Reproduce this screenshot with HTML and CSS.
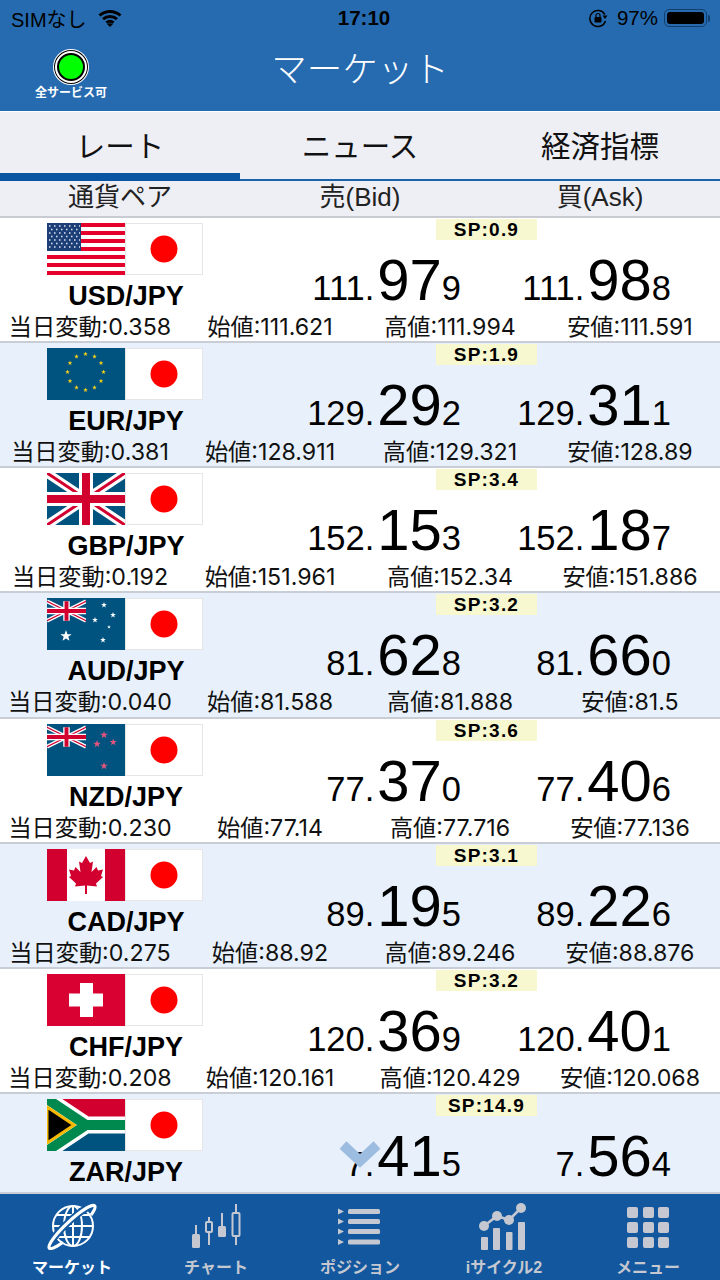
FILE: index.html
```html
<!DOCTYPE html>
<html lang="ja">
  <head>
    <meta charset="utf-8">
    <meta name="viewport" content="width=device-width, initial-scale=1.0">
    <title>マーケット</title>
    <link rel="stylesheet" href="styles.css">
  </head>
  <body>
    <svg class="defs" width="0" height="0">
      <defs>
        <symbol id="jp" viewBox="0 0 78 52">
          <rect width="78" height="52" fill="#fff"/>
          <rect x=".5" y=".5" width="77" height="51" fill="none" stroke="#e6e6e6"/>
          <circle cx="39" cy="26" r="13.5" fill="#f00"/>
        </symbol>
        <symbol id="ujack" viewBox="0 0 60 30">
          <rect width="60" height="30" fill="#00527f"/>
          <path d="M0 0 60 30M60 0 0 30" stroke="#fff" stroke-width="6"/>
          <path d="M0 0 60 30M60 0 0 30" stroke="#d1002f" stroke-width="2"/>
          <path d="M30 0V30M0 15H60" stroke="#fff" stroke-width="10"/>
          <path d="M30 0V30M0 15H60" stroke="#d1002f" stroke-width="6"/>
        </symbol>
        <symbol id="star" viewBox="-10 -10 20 20">
          <path d="M0-10 2.4-3.1 9.5-3.1 3.8 1.2 5.9 8.1 0 4 -5.9 8.1-3.8 1.2-9.5-3.1-2.4-3.1Z"/>
        </symbol>
        <symbol id="us" viewBox="0 0 78 52">
          <rect width="78" height="52" fill="#fff"/>
          <path d="M0 2H78M0 10H78M0 18H78M0 26H78M0 34H78M0 42H78M0 50H78" stroke="#e4002b" stroke-width="4"/>
          <rect width="34" height="28" fill="#1d3f77"/>
          <path d="M2 3H33M4 6.500H33M2 10H33M4 13.500H33M2 17H33M4 20.500H33M2 24H33" stroke="#dfe6f2" stroke-width="1.500" stroke-dasharray="1.500 3.500"/>
        </symbol>
        <symbol id="eu" viewBox="0 0 78 52">
          <rect width="78" height="52" fill="#00527f"/>
          <g fill="#f7d117">
            <use href="#star" x="36" y="3.500" width="5" height="5"/>
            <use href="#star" x="45" y="6" width="5" height="5"/>
            <use href="#star" x="51.500" y="12.500" width="5" height="5"/>
            <use href="#star" x="54" y="21.500" width="5" height="5"/>
            <use href="#star" x="51.500" y="30.500" width="5" height="5"/>
            <use href="#star" x="45" y="37" width="5" height="5"/>
            <use href="#star" x="36" y="39.500" width="5" height="5"/>
            <use href="#star" x="27" y="37" width="5" height="5"/>
            <use href="#star" x="20.500" y="30.500" width="5" height="5"/>
            <use href="#star" x="18" y="21.500" width="5" height="5"/>
            <use href="#star" x="20.500" y="12.500" width="5" height="5"/>
            <use href="#star" x="27" y="6" width="5" height="5"/>
          </g>
        </symbol>
        <symbol id="gb" viewBox="0 0 78 52">
          <rect width="78" height="52" fill="#00527f"/>
          <path d="M0 0 78 52M78 0 0 52" stroke="#fff" stroke-width="9"/>
          <path d="M0 0 78 52M78 0 0 52" stroke="#d1002f" stroke-width="3"/>
          <path d="M39 0V52M0 26H78" stroke="#fff" stroke-width="14"/>
          <path d="M39 0V52M0 26H78" stroke="#d1002f" stroke-width="8"/>
        </symbol>
        <symbol id="au" viewBox="0 0 78 52">
          <rect width="78" height="52" fill="#00527f"/>
          <use href="#ujack" width="39" height="26"/>
          <g fill="#fff">
            <use href="#star" x="13" y="32" width="12" height="12"/>
            <use href="#star" x="54" y="4" width="6" height="6"/>
            <use href="#star" x="63" y="14" width="6" height="6"/>
            <use href="#star" x="45" y="19" width="6" height="6"/>
            <use href="#star" x="60" y="27" width="4" height="4"/>
            <use href="#star" x="53" y="39" width="6" height="6"/>
          </g>
        </symbol>
        <symbol id="nz" viewBox="0 0 78 52">
          <rect width="78" height="52" fill="#00527f"/>
          <use href="#ujack" width="39" height="26"/>
          <g fill="#e0557d">
            <use href="#star" x="53" y="7" width="8" height="8"/>
            <use href="#star" x="62.500" y="14.500" width="7.500" height="7.500"/>
            <use href="#star" x="46" y="16" width="8" height="8"/>
            <use href="#star" x="53" y="38" width="8" height="8"/>
          </g>
        </symbol>
        <symbol id="ca" viewBox="0 0 78 52">
          <rect width="78" height="52" fill="#fff"/>
          <path d="M0 0H20V52H0ZM58 0H78V52H58Z" fill="#d1002f"/>
          <path d="M39 7 43 14 46 12.500 44.500 23 49.500 18 51 21.500 56 20.500 54 27 56 28 49 34.500 50 37.500 40 36.500V45H38V36.500L28 37.500 29 34.500 22 28 24 27 22 20.500 27 21.500 28.500 18 33.500 23 32 12.500 35 14Z" fill="#d1002f"/>
        </symbol>
        <symbol id="ch" viewBox="0 0 78 52">
          <rect width="78" height="52" fill="#d90032"/>
          <path d="M33 9H46V19.500H56V32.500H46V43H33V32.500H22V19.500H33Z" fill="#fff"/>
        </symbol>
        <symbol id="za" viewBox="0 0 78 52">
          <rect width="78" height="26" fill="#d1002f"/>
          <rect y="26" width="78" height="26" fill="#00527f"/>
          <path d="M0 0 39 26 0 52M39 26H78" fill="none" stroke="#fff" stroke-width="17"/>
          <path d="M0 0 39 26 0 52M39 26H78" fill="none" stroke="#00894e" stroke-width="10"/>
          <path d="M0 8 27 26 0 44Z" fill="#000" stroke="#f7b800" stroke-width="3"/>
        </symbol>
      </defs>
    </svg>

    <header class="top">
      <div class="status">
        <div class="status-left">
          <span>SIMなし</span>
          <svg class="wifi" viewBox="0 0 24 18" width="24" height="18">
            <path d="M1.500 6.500C7.500 1 16.500 1 22.500 6.500M5 10.200C9 6.700 15 6.700 19 10.200M8.400 13.600C10.500 12 13.500 12 15.600 13.600" fill="none" stroke="#000" stroke-width="3"/>
            <path d="M12 18 9 15C11 14 13 14 15 15Z"/>
          </svg>
        </div>
        <div class="status-time">17:10</div>
        <div class="status-right">
          <svg class="rotlock" viewBox="0 0 20 20" width="20" height="20">
            <path d="M16.800 6.500A8 8 0 1 0 17.500 13" fill="none" stroke="#000" stroke-width="1.500"/>
            <path d="M14.500 7.500H19.500L17 11Z"/>
            <rect x="6.500" y="9" width="7" height="5.500" rx="1"/>
            <path d="M8 9V7.500A2 2 0 0 1 12 7.500V9" fill="none" stroke="#000" stroke-width="1.200"/>
          </svg>
          <span>97%</span>
          <div class="battery"><div class="battery-fill"></div></div>
          <div class="battery-tip"></div>
        </div>
      </div>
      <div class="nav">
        <div class="service">
          <div class="lamp"></div>
          <div class="service-label">全サービス可</div>
        </div>
        <h1 class="title">マーケット</h1>
      </div>
    </header>

    <nav class="tabs">
      <div class="tab tab-active">レート</div>
      <div class="tab">ニュース</div>
      <div class="tab">経済指標</div>
    </nav>

    <div class="cols">
      <div>通貨ペア</div>
      <div>売(Bid)</div>
      <div>買(Ask)</div>
    </div>

    <main class="list">
      <section class="row">
        <div class="main">
          <div class="pair">
            <div class="flags"><svg class="flag"><use href="#us"/></svg><svg class="flag"><use href="#jp"/></svg></div>
            <div class="pair-name">USD/JPY</div>
          </div>
          <div class="quotes">
            <div class="sp">SP:0.9</div>
            <div class="prices">
              <div class="price">111.<b>97</b>9</div>
              <div class="price">111.<b>98</b>8</div>
            </div>
          </div>
        </div>
        <div class="stats"><div>当日変動:0.358</div><div>始値:111.621</div><div>高値:111.994</div><div>安値:111.591</div></div>
      </section>

      <section class="row row-alt">
        <div class="main">
          <div class="pair">
            <div class="flags"><svg class="flag"><use href="#eu"/></svg><svg class="flag"><use href="#jp"/></svg></div>
            <div class="pair-name">EUR/JPY</div>
          </div>
          <div class="quotes">
            <div class="sp">SP:1.9</div>
            <div class="prices">
              <div class="price">129.<b>29</b>2</div>
              <div class="price">129.<b>31</b>1</div>
            </div>
          </div>
        </div>
        <div class="stats"><div>当日変動:0.381</div><div>始値:128.911</div><div>高値:129.321</div><div>安値:128.89</div></div>
      </section>

      <section class="row">
        <div class="main">
          <div class="pair">
            <div class="flags"><svg class="flag"><use href="#gb"/></svg><svg class="flag"><use href="#jp"/></svg></div>
            <div class="pair-name">GBP/JPY</div>
          </div>
          <div class="quotes">
            <div class="sp">SP:3.4</div>
            <div class="prices">
              <div class="price">152.<b>15</b>3</div>
              <div class="price">152.<b>18</b>7</div>
            </div>
          </div>
        </div>
        <div class="stats"><div>当日変動:0.192</div><div>始値:151.961</div><div>高値:152.34</div><div>安値:151.886</div></div>
      </section>

      <section class="row row-alt">
        <div class="main">
          <div class="pair">
            <div class="flags"><svg class="flag"><use href="#au"/></svg><svg class="flag"><use href="#jp"/></svg></div>
            <div class="pair-name">AUD/JPY</div>
          </div>
          <div class="quotes">
            <div class="sp">SP:3.2</div>
            <div class="prices">
              <div class="price">81.<b>62</b>8</div>
              <div class="price">81.<b>66</b>0</div>
            </div>
          </div>
        </div>
        <div class="stats"><div>当日変動:0.040</div><div>始値:81.588</div><div>高値:81.888</div><div>安値:81.5</div></div>
      </section>

      <section class="row">
        <div class="main">
          <div class="pair">
            <div class="flags"><svg class="flag"><use href="#nz"/></svg><svg class="flag"><use href="#jp"/></svg></div>
            <div class="pair-name">NZD/JPY</div>
          </div>
          <div class="quotes">
            <div class="sp">SP:3.6</div>
            <div class="prices">
              <div class="price">77.<b>37</b>0</div>
              <div class="price">77.<b>40</b>6</div>
            </div>
          </div>
        </div>
        <div class="stats"><div>当日変動:0.230</div><div>始値:77.14</div><div>高値:77.716</div><div>安値:77.136</div></div>
      </section>

      <section class="row row-alt">
        <div class="main">
          <div class="pair">
            <div class="flags"><svg class="flag"><use href="#ca"/></svg><svg class="flag"><use href="#jp"/></svg></div>
            <div class="pair-name">CAD/JPY</div>
          </div>
          <div class="quotes">
            <div class="sp">SP:3.1</div>
            <div class="prices">
              <div class="price">89.<b>19</b>5</div>
              <div class="price">89.<b>22</b>6</div>
            </div>
          </div>
        </div>
        <div class="stats"><div>当日変動:0.275</div><div>始値:88.92</div><div>高値:89.246</div><div>安値:88.876</div></div>
      </section>

      <section class="row">
        <div class="main">
          <div class="pair">
            <div class="flags"><svg class="flag"><use href="#ch"/></svg><svg class="flag"><use href="#jp"/></svg></div>
            <div class="pair-name">CHF/JPY</div>
          </div>
          <div class="quotes">
            <div class="sp">SP:3.2</div>
            <div class="prices">
              <div class="price">120.<b>36</b>9</div>
              <div class="price">120.<b>40</b>1</div>
            </div>
          </div>
        </div>
        <div class="stats"><div>当日変動:0.208</div><div>始値:120.161</div><div>高値:120.429</div><div>安値:120.068</div></div>
      </section>

      <section class="row row-alt row-last">
        <div class="main">
          <div class="pair">
            <div class="flags"><svg class="flag"><use href="#za"/></svg><svg class="flag"><use href="#jp"/></svg></div>
            <div class="pair-name">ZAR/JPY</div>
          </div>
          <div class="quotes">
            <div class="sp">SP:14.9</div>
            <div class="prices">
              <div class="price">7.<b>41</b>5</div>
              <div class="price">7.<b>56</b>4</div>
            </div>
          </div>
        </div>
      </section>

      <!-- pull-down hint, sits over the last row -->
      <svg class="hint" viewBox="0 0 42 28" width="42" height="28">
        <path d="M4 4 21 20 38 4" fill="none" stroke="#9cbde0" stroke-width="10"/>
      </svg>
    </main>

    <footer class="tabbar">
      <div class="tabitem tabitem-active">
        <svg viewBox="0 0 50 48" width="50" height="48">
          <g fill="none" stroke="#fff" stroke-width="2">
            <circle cx="26" cy="24" r="20"/>
            <ellipse cx="26" cy="24" rx="9" ry="20"/>
            <path d="M26 4V44M6 24H46M9 13H43M9 35H43"/>
          </g>
          <g fill="none" transform="rotate(-43 25 25)">
            <path d="M-6 25A31 6 0 0 1 56 25" stroke="#13589f" stroke-width="7"/>
            <path d="M-6 25A31 6 0 0 1 56 25M-6 25A31 6 0 0 0 8 30M56 25A31 6 0 0 1 47 29.200" stroke="#fff" stroke-width="3.200"/>
          </g>
        </svg>
        <div>マーケット</div>
      </div>
      <div class="tabitem">
        <svg viewBox="0 0 50 48" width="50" height="48" fill="#c5c8d0">
          <path d="M5 23V33M18 15V20M18 30V43M31 11V25M45 2V11M45 34V43" stroke="#c5c8d0" stroke-width="2" fill="none"/>
          <rect x="1" y="32" width="8" height="14" rx="1.500"/>
          <rect x="15" y="20" width="6" height="10" rx="1" fill="none" stroke="#c5c8d0" stroke-width="2"/>
          <rect x="27" y="24" width="8" height="11" rx="1.500"/>
          <rect x="41.500" y="11" width="7" height="23" rx="1" fill="none" stroke="#c5c8d0" stroke-width="2"/>
        </svg>
        <div>チャート</div>
      </div>
      <div class="tabitem">
        <svg viewBox="0 0 50 48" width="50" height="48" fill="#c5c8d0">
          <path d="M3 6.500 9 9.500 3 12.500ZM3 16.500 9 19.500 3 22.500ZM3 26.500 9 29.500 3 32.500ZM3 37 9 40 3 43Z"/>
          <rect x="13" y="7" width="32" height="5" rx="1.500"/>
          <rect x="13" y="17" width="32" height="5" rx="1.500"/>
          <rect x="13" y="27" width="32" height="5" rx="1.500"/>
          <rect x="13" y="37.500" width="32" height="5" rx="1.500"/>
        </svg>
        <div>ポジション</div>
      </div>
      <div class="tabitem">
        <svg viewBox="0 0 50 48" width="50" height="48" fill="#c5c8d0">
          <rect x="2" y="35" width="7" height="13" rx="1"/>
          <rect x="14" y="26" width="7" height="22" rx="1"/>
          <rect x="27" y="30" width="6.500" height="18" rx="1"/>
          <rect x="39" y="20" width="7" height="28" rx="1"/>
          <path d="M5 24 18 14 30 18 42 6" fill="none" stroke="#c5c8d0" stroke-width="2.500"/>
          <circle cx="5" cy="24" r="5"/>
          <circle cx="18" cy="14" r="5"/>
          <circle cx="30" cy="18" r="5"/>
          <circle cx="42" cy="6" r="5"/>
        </svg>
        <div>iサイクル2</div>
      </div>
      <div class="tabitem">
        <svg viewBox="0 0 50 48" width="50" height="48" fill="#c5c8d0">
          <rect x="4" y="5" width="11" height="11" rx="2"/>
          <rect x="20" y="5" width="11" height="11" rx="2"/>
          <rect x="35" y="5" width="11" height="11" rx="2"/>
          <rect x="4" y="20" width="11" height="11" rx="2"/>
          <rect x="20" y="20" width="11" height="11" rx="2"/>
          <rect x="35" y="20" width="11" height="11" rx="2"/>
          <rect x="4" y="35" width="11" height="11" rx="2"/>
          <rect x="20" y="35" width="11" height="11" rx="2"/>
          <rect x="35" y="35" width="11" height="11" rx="2"/>
        </svg>
        <div>メニュー</div>
      </div>
    </footer>
  </body>
</html>
```

FILE: styles.css
```css
html, body {
  width: 720px;
  height: 1280px;
  margin: 0;
  padding: 0;
  background-color: #fff;
  color: #000;
  font-family: "Liberation Sans", "Noto Sans CJK JP", sans-serif;
  overflow: hidden;
}
body {
  display: flex;
  flex-direction: column;
}
.defs {
  position: absolute;
}

/* status + nav */
.top {
  height: 111px;
  background-color: #266bb0;
}
.status {
  height: 36px;
  display: grid;
  grid-template-columns: 1fr auto 1fr;
  align-items: center;
  padding: 0 10px 0 11px;
  font-size: 20px;
}
.status-left {
  display: flex;
  align-items: center;
  gap: 11px;
}
.status-time {
  margin-left: 7px;
  font-weight: 700;
  font-size: 20.500px;
}
.status-right {
  display: flex;
  align-items: center;
  justify-content: flex-end;
  font-size: 20.500px;
}
.rotlock {
  margin-right: 9px;
}
.battery {
  width: 43px;
  height: 18px;
  margin-left: 6px;
  padding: 2px;
  box-sizing: border-box;
  border: 1px solid #123f6e;
  border-radius: 5px;
}
.battery-fill {
  width: 100%;
  height: 100%;
  background: #000;
  border-radius: 3px;
}
.battery-tip {
  width: 2px;
  height: 7px;
  margin-left: 1px;
  background: #123f6e;
  border-radius: 0 2px 2px 0;
}
.nav {
  height: 75px;
  display: grid;
  grid-template-columns: 1fr auto 1fr;
  align-items: center;
}
.service {
  width: 72px;
  margin-left: 35px;
  display: flex;
  flex-direction: column;
  align-items: center;
  margin-top: 1px;
}
.lamp {
  width: 24px;
  height: 24px;
  background: #0f0;
  border-radius: 50%;
  border: 2px solid #000;
  box-shadow: 0 0 0 2px #fff, 0 0 0 3px #000, 0 0 0 4px #fff;
  margin: 4px 4px 2px;
  box-sizing: content-box;
}
.service-label {
  color: #fff;
  font-size: 12px;
  font-weight: 700;
  white-space: nowrap;
}
.title {
  margin: 0 0 7px;
  color: #fff;
  font-size: 35.500px;
  font-weight: 300;
  line-height: 1.2;
}

/* tabs */
.tabs {
  margin-top: 1px;
  height: 69px;
  display: grid;
  grid-template-columns: repeat(3, 1fr);
  background-color: #eeeff5;
  box-shadow: inset 0 -2px 0 #1a63ab;
}
.tab {
  display: flex;
  align-items: center;
  justify-content: center;
  padding-bottom: 6px;
  font-size: 29.500px;
  font-weight: 400;
  color: #111;
}
.tab-active {
  box-shadow: inset 0 -8px 0 #0a55a3;
}
.cols {
  height: 35px;
  display: grid;
  grid-template-columns: repeat(3, 1fr);
  align-items: center;
  text-align: center;
  font-size: 26px;
  font-weight: 400;
  line-height: 30px;
  color: #222;
  background-color: #eeeff5;
  border-bottom: 2px solid #c9cbd2;
}
.cols div {
  margin-top: -3px;
}

/* rate rows */
.list {
  position: relative;
  flex: 1;
  overflow: hidden;
}
.row {
  height: 125.150px;
  box-sizing: border-box;
  background-color: #fff;
  border-bottom: 2px solid #c9cdd6;
}
.row-alt {
  background-color: #e8f1fb;
}
.row-last {
  height: 101px;
  border-bottom-width: 3px;
}
.main {
  height: 96px;
  display: flex;
}
.pair {
  width: 252px;
  padding-top: 5px;
  box-sizing: border-box;
}
.flags {
  display: flex;
  height: 52px;
  margin-left: 47px;
}
.flag {
  width: 78px;
  height: 52px;
}
.pair-name {
  text-align: center;
  font-size: 27px;
  font-weight: 700;
  line-height: 32px;
  margin-top: 5px;
}
.quotes {
  flex: 1;
}
.sp {
  width: 101px;
  height: 21px;
  margin: 1px 0 0 184px;
  background-color: #f7f8cf;
  font-size: 19px;
  font-weight: 700;
  line-height: 21px;
  text-align: center;
  letter-spacing: 1.200px;
}
.prices {
  display: flex;
  margin-top: 8px;
}
.price {
  flex: none;
  width: 209px;
  text-align: right;
  font-size: 34.500px;
  line-height: 64px;
  white-space: nowrap;
}
.price b {
  font-size: 58px;
  font-weight: 400;
  margin-left: 3px;
}
.price + .price {
  width: 210px;
}
.stats {
  display: grid;
  grid-template-columns: repeat(4, 1fr);
  text-align: center;
  font-family: Inter, "Noto Sans CJK JP", sans-serif;
  font-size: 23.200px;
  font-weight: 400;
  line-height: 26px;
  color: #111;
  white-space: nowrap;
}
.hint {
  position: absolute;
  left: 339px;
  top: 923px;
}

/* tab bar */
.tabbar {
  height: 86px;
  box-sizing: border-box;
  padding-top: 8px;
  display: grid;
  grid-template-columns: repeat(5, 1fr);
  background-color: #13589f;
  color: #c5c8d0;
  font-size: 16px;
  font-weight: 700;
  text-align: center;
}
.tabitem {
  display: flex;
  flex-direction: column;
  align-items: center;
  gap: 4px;
  white-space: nowrap;
}
.tabitem-active {
  color: #fff;
}
```
